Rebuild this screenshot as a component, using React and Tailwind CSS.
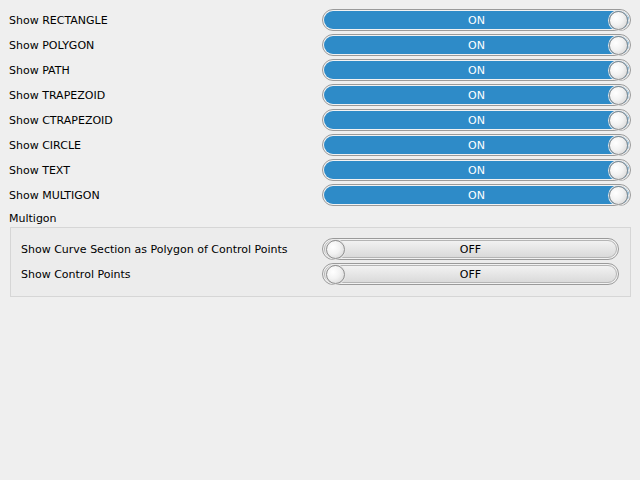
const shapes = ["RECTANGLE", "POLYGON", "PATH", "TRAPEZOID", "CTRAPEZOID", "CIRCLE", "TEXT", "MULTIGON"];

function Knob() {
    return (
        <div className="h-[19px] w-[19px] rounded-full border border-[#8f8f8f] bg-[radial-gradient(circle_at_35%_35%,#ffffff_0%,#f2f2f2_45%,#d0d0d0_100%)] shadow-[0_0_0_1px_#e6e6e6]" />
    );
}

function Toggle({ on, width }) {
    return (
        <div className={`${width} h-[22px] rounded-full border border-[#9a9a9a] p-px bg-[#f2f2f2]`}>
            <div className={`relative flex h-full items-center rounded-full ${on ? "bg-[#2e8bc8] justify-end pr-px" : "bg-gradient-to-b from-[#f2f2f2] to-[#dadada] justify-start pl-px border border-[#b4b4b4]"}`}>
                <span className={`absolute inset-0 flex items-center justify-center pt-[2px] text-[11px] ${on ? "text-white" : "text-black"}`}>
                    {on ? "ON" : "OFF"}
                </span>
                <div className="relative">
                    <Knob />
                </div>
            </div>
        </div>
    );
}

export default function App() {
    return (
        <div className="min-h-screen w-[640px] bg-[#efefef] pl-[9px] pr-[9px] pt-[9px] text-[11px] text-black" style={{ fontFamily: '"DejaVu Sans", sans-serif' }}>
            <div className="flex flex-col gap-[3px]">
                {shapes.map((s) => (
                    <div key={s} className="flex h-[22px] items-center justify-between">
                        <span className="pt-[2px]">Show {s}</span>
                        <Toggle on width="w-[309px]" />
                    </div>
                ))}
            </div>
            <div className="mt-[2px] flex h-[19px] items-center pt-[4px]">Multigon</div>
            <div className="ml-px border border-[#d6d6d6] bg-[#ececec] px-[10px] pt-[10px] pb-[11px]">
                <div className="flex flex-col gap-[3px] pr-px">
                    <div className="flex h-[22px] items-center justify-between">
                        <span className="pt-[2px]">Show Curve Section as Polygon of Control Points</span>
                        <Toggle on={false} width="w-[297px]" />
                    </div>
                    <div className="flex h-[22px] items-center justify-between">
                        <span className="pt-[2px]">Show Control Points</span>
                        <Toggle on={false} width="w-[297px]" />
                    </div>
                </div>
            </div>
        </div>
    );
}
